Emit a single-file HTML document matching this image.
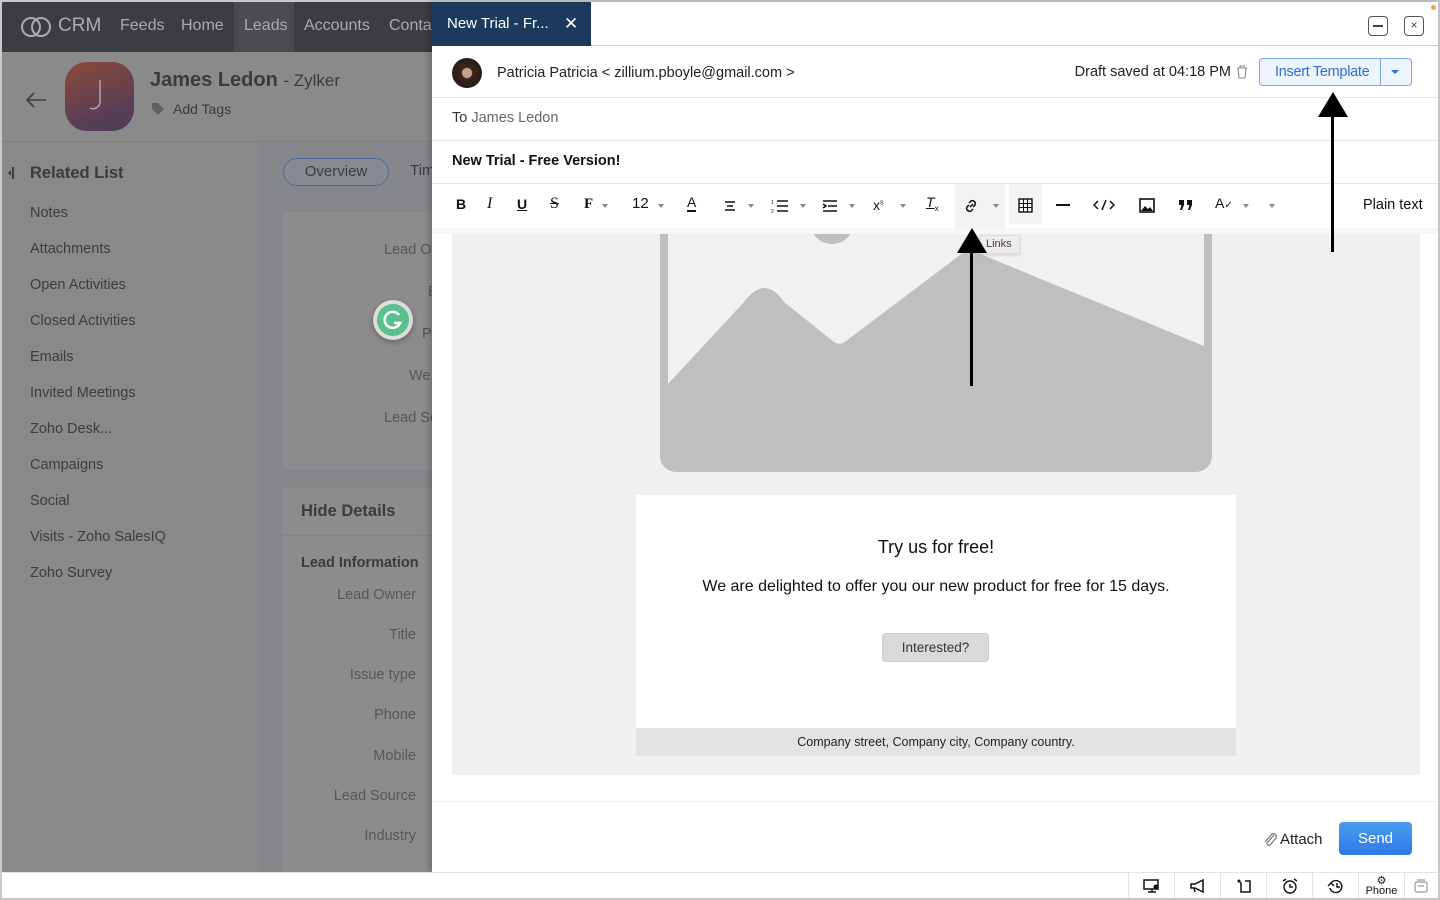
<!DOCTYPE html>
<html><head><meta charset="utf-8"><style>
*{box-sizing:border-box;margin:0;padding:0}
body{width:1440px;height:900px;overflow:hidden;background:#c9c9c9;font-family:"Liberation Sans",sans-serif;position:relative}
.abs{position:absolute}
.nav{left:2px;top:2px;width:430px;height:50px;background:#3b3d42;color:#a9abb0;font-size:16px}
.nav span{position:absolute;top:15px}
.lt{color:#3a3b3e}
.side a{position:absolute;left:30px;font-size:14.5px;color:#3c3d40}
.fld{position:absolute;right:1024px;font-size:14.5px;color:#55575c;text-align:right}
.tb{position:absolute;top:196px;font-size:14px;color:#111}
.car{position:absolute;width:0;height:0;border-left:3.5px solid transparent;border-right:3.5px solid transparent;border-top:4px solid #888}
.sb{width:46px;border-right:1px solid #e3e3e3;display:flex;align-items:center;justify-content:center}
</style></head><body>
<div class="abs" style="left:2px;top:2px;width:430px;height:870px;background:#898989"></div>
<div class="abs nav">
 <svg class="abs" style="left:18px;top:14px" width="32" height="22" viewBox="0 0 32 22"><circle cx="11" cy="11" r="9" fill="none" stroke="#a9abb0" stroke-width="2"/><circle cx="21" cy="11" r="9" fill="none" stroke="#a9abb0" stroke-width="2"/></svg>
 <span style="left:56px;top:13px;font-size:19px">CRM</span>
 <span style="left:118px">Feeds</span><span style="left:179px">Home</span>
 <div class="abs" style="left:232px;top:0;width:60px;height:50px;background:#4b4c51"></div>
 <span style="left:242px">Leads</span><span style="left:302px">Accounts</span><span style="left:387px">Conta</span>
</div>
<div class="abs" style="left:2px;top:52px;width:430px;height:90px;background:#8a8a8a;border-bottom:1px solid #7e7f82"></div>
<svg class="abs" style="left:24px;top:90px" width="24" height="20"><path d="M22 10H3M10 3L3 10l7 7" fill="none" stroke="#3c3d40" stroke-width="1.6"/></svg>
<div class="abs" style="left:65px;top:62px;width:69px;height:69px;border-radius:22px;background:linear-gradient(160deg,#8b4a3a,#5a3e55 70%,#4a3d55)"></div>
<svg class="abs" style="left:88px;top:78px" width="20" height="36"><path d="M12 2v22a7 7 0 01-10 6" fill="none" stroke="#b4a6ae" stroke-width="1.5"/></svg>
<div class="abs lt" style="left:150px;top:69px;font-size:20px;font-weight:bold">James Ledon <span style="font-weight:normal;font-size:17px">- Zylker</span></div>
<svg class="abs" style="left:151px;top:102px" width="14" height="14"><path d="M1 7V1h6l6 6-6 6z" fill="#5f6063"/></svg>
<div class="abs lt" style="left:173px;top:101px;font-size:14px">Add Tags</div>
<div class="abs" style="left:260px;top:143px;width:172px;height:729px;background:#86878b"></div>
<div class="abs" style="left:12px;top:167px;width:2px;height:12px;background:#3c3d40"></div>
<div class="abs" style="left:8px;top:170px;border-top:3px solid transparent;border-bottom:3px solid transparent;border-right:3px solid #3c3d40"></div>
<div class="abs lt" style="left:30px;top:164px;font-size:16.5px;font-weight:bold">Related List</div>
<div class="side">
<a style="top:205px">Notes</a><a style="top:241px">Attachments</a><a style="top:277px">Open Activities</a><a style="top:313px">Closed Activities</a><a style="top:349px">Emails</a><a style="top:385px">Invited Meetings</a><a style="top:421px">Zoho Desk...</a><a style="top:457px">Campaigns</a><a style="top:493px">Social</a><a style="top:529px">Visits - Zoho SalesIQ</a><a style="top:565px">Zoho Survey</a>
</div>
<div class="abs" style="left:283px;top:158px;width:106px;height:28px;border:1.5px solid #4f6b95;border-radius:14px;font-size:15px;color:#3c3d40;text-align:center;line-height:25px;background:#878a90">Overview</div>
<div class="abs lt" style="left:410px;top:162px;font-size:15px">Tim</div>
<div class="abs" style="left:281px;top:210px;width:160px;height:261px;background:#8c8c8c;border:1px solid #828386;border-radius:4px"></div>
<div class="fld" style="top:242px;right:auto;left:384px">Lead O</div>
<div class="fld" style="top:284px;right:auto;left:428px">E</div>
<div class="fld" style="top:326px;right:auto;left:422px">P</div>
<div class="fld" style="top:368px;right:auto;left:409px">We</div>
<div class="fld" style="top:410px;right:auto;left:384px">Lead Sc</div>
<div class="abs" style="left:373px;top:300px;width:40px;height:40px;border-radius:50%;background:#dcdcdc;box-shadow:0 2px 6px rgba(0,0,0,.3)"></div>
<div class="abs" style="left:377px;top:304px;width:32px;height:32px;border-radius:50%;background:#5ac08f"></div>
<svg class="abs" style="left:377px;top:304px" width="32" height="32"><path d="M22 11a8 8 0 10 1 8h-6" fill="none" stroke="#fff" stroke-width="2.5"/></svg>
<div class="abs" style="left:281px;top:487px;width:160px;height:400px;background:#8c8c8c;border:1px solid #828386;border-radius:4px"></div>
<div class="abs" style="left:281px;top:535px;width:160px;height:1px;background:#828386"></div>
<div class="abs lt" style="left:301px;top:502px;font-size:16.5px;font-weight:bold">Hide Details</div>
<div class="abs lt" style="left:301px;top:555px;font-size:14.5px;font-weight:bold">Lead Information</div>
<div class="fld" style="top:587px">Lead Owner</div><div class="fld" style="top:627px">Title</div><div class="fld" style="top:667px">Issue type</div><div class="fld" style="top:707px">Phone</div><div class="fld" style="top:748px">Mobile</div><div class="fld" style="top:788px">Lead Source</div><div class="fld" style="top:828px">Industry</div>

<div class="abs" style="left:432px;top:2px;width:1006px;height:870px;background:#fff;box-shadow:-3px 0 6px rgba(0,0,0,.2)"></div>
<div class="abs" style="left:432px;top:2px;width:159px;height:44px;background:#1c3a5e;color:#fff;font-size:15px;line-height:44px;padding-left:15px">New Trial - Fr...<span style="position:absolute;left:132px;font-size:17px">✕</span></div>
<div class="abs" style="left:591px;top:45px;width:847px;height:1px;background:#c7ccd6"></div>
<div class="abs" style="left:1368px;top:16px;width:20px;height:20px;border:1.3px solid #555;border-radius:4px"><div style="margin:8px 4px;height:1.5px;background:#444"></div></div>
<div class="abs" style="left:1404px;top:16px;width:20px;height:20px;border:1.3px solid #555;border-radius:4px;font-size:12px;text-align:center;line-height:17px;color:#444">×</div>
<div class="abs" style="left:1431px;top:5px;width:5px;height:5px;border-radius:50%;background:#f4a14a"></div>
<div class="abs" style="left:452px;top:58px;width:30px;height:30px;border-radius:50%;background:radial-gradient(ellipse at 50% 50%,#c9a08c 0 22%,#3a2520 26%,#1e1410)"></div>
<div class="abs" style="left:497px;top:65px;font-size:14.5px;color:#222">Patricia Patricia &lt; zillium.pboyle@gmail.com &gt;</div>
<div class="abs" style="right:209px;top:64px;font-size:14.5px;color:#222;white-space:nowrap">Draft saved at 04:18 PM</div>
<svg class="abs" style="left:1236px;top:65px" width="12" height="14"><path d="M1 3h10M4 3V1h4v2M2 3l1 10h6l1-10" fill="none" stroke="#888" stroke-width="1.1"/></svg>
<div class="abs" style="left:1259px;top:58px;width:153px;height:28px;border:1px solid #7aa7ea;border-radius:4px;background:#eef4fe"></div>
<div class="abs" style="left:1275px;top:64px;font-size:14.5px;color:#2d6fd6;letter-spacing:-0.3px">Insert Template</div>
<div class="abs" style="left:1380px;top:58px;width:1px;height:28px;background:#7aa7ea"></div>
<div class="abs" style="left:1391px;top:70px;border-left:4px solid transparent;border-right:4px solid transparent;border-top:4px solid #2d6fd6;width:0"></div>
<div class="abs" style="left:432px;top:97px;width:1006px;height:1px;background:#e6e6e6"></div>
<div class="abs" style="left:452px;top:110px;font-size:14.5px;color:#666"><span style="color:#333">To</span> James Ledon</div>
<div class="abs" style="left:432px;top:140px;width:1006px;height:1px;background:#e6e6e6"></div>
<div class="abs" style="left:452px;top:153px;font-size:14.5px;color:#111;font-weight:bold">New Trial - Free Version!</div>
<div class="abs" style="left:432px;top:183px;width:1006px;height:1px;background:#e6e6e6"></div>
<div class="abs" style="left:955px;top:184px;width:50px;height:44px;background:#f3f3f3"></div>
<div class="abs" style="left:1009px;top:184px;width:33px;height:40px;background:#f3f3f3"></div>
<div class="tb" style="left:456px;font-weight:bold">B</div>
<div class="tb" style="left:487px;font-family:'Liberation Serif';font-style:italic;font-size:16px;top:195px">I</div>
<div class="tb" style="left:517px;text-decoration:underline;font-weight:bold">U</div>
<div class="tb" style="left:550px;font-family:'Liberation Serif';font-size:16px;top:195px;text-decoration:line-through">S</div>
<div class="tb" style="left:584px;font-family:'Liberation Serif';font-weight:bold;font-size:15px">F</div><div class="car" style="left:602px;top:204px"></div>
<div class="tb" style="left:632px;top:195px;font-size:15px">12</div><div class="car" style="left:658px;top:204px"></div>
<div class="tb" style="left:687px;font-size:14px;top:195px;border-bottom:2px solid #111;line-height:15px">A</div>
<svg class="abs" style="left:723px;top:199px" width="14" height="14"><path d="M2 3h10M4 7h6M2 11h10" stroke="#111" stroke-width="1.6"/></svg><div class="car" style="left:748px;top:204px"></div>
<svg class="abs" style="left:771px;top:198px" width="18" height="16"><path d="M6 3h11M6 8h11M6 13h11" stroke="#111" stroke-width="1.6"/><text x="0" y="6" font-size="5" fill="#111">1</text><text x="0" y="15" font-size="5" fill="#111">2</text></svg><div class="car" style="left:800px;top:204px"></div>
<svg class="abs" style="left:822px;top:199px" width="16" height="14"><path d="M1 2h14M6 7h9M1 12h14M1 5l3 2-3 2" stroke="#111" stroke-width="1.6" fill="none"/></svg><div class="car" style="left:849px;top:204px"></div>
<div class="tb" style="left:873px;top:197px;font-size:14px">x<sup style="font-size:7px">s</sup></div><div class="car" style="left:900px;top:204px"></div>
<div class="tb" style="left:926px;top:194px;font-style:italic;font-size:14px;text-decoration:underline">T<sub style="font-size:8px;font-style:normal">x</sub></div>
<svg class="abs" style="left:963px;top:198px" width="16" height="16"><path d="M7 9l3-3M6 5l2-2a3 3 0 014 4l-2 2M10 11l-2 2a3 3 0 01-4-4l2-2" stroke="#111" stroke-width="1.5" fill="none"/></svg><div class="car" style="left:993px;top:204px"></div>
<svg class="abs" style="left:1018px;top:198px" width="15" height="15"><rect x="1" y="1" width="13" height="13" fill="none" stroke="#111" stroke-width="1.4"/><path d="M1 5.5h13M1 9.5h13M5.5 1v13M9.5 1v13" stroke="#111" stroke-width="1"/></svg>
<div class="abs" style="left:1056px;top:204px;width:14px;height:2px;background:#111"></div>
<svg class="abs" style="left:1093px;top:199px" width="22" height="12"><path d="M5 2L1 6l4 4M17 2l4 4-4 4M13 1L9 11" fill="none" stroke="#111" stroke-width="1.5"/></svg>
<svg class="abs" style="left:1139px;top:198px" width="16" height="15"><rect x="1" y="1" width="14" height="13" fill="none" stroke="#111" stroke-width="1.6"/><path d="M2 13l4-5 3 3 2-2 3 4z" fill="#111"/></svg>
<svg class="abs" style="left:1178px;top:199px" width="16" height="12"><path d="M1 1h5v5l-2 5H2l1.5-5H1zM9 1h5v5l-2 5h-2l1.5-5H9z" fill="#111"/></svg>
<div class="tb" style="left:1215px;top:195px;font-size:14px">A<span style="font-size:10px">✓</span></div><div class="car" style="left:1243px;top:204px"></div><div class="car" style="left:1269px;top:204px"></div>
<div class="abs" style="left:1363px;top:197px;font-size:14.5px;color:#111">Plain text</div>
<div class="abs" style="left:432px;top:228px;width:1006px;height:6px;background:#f6f6f6"></div>
<div class="abs" style="left:452px;top:234px;width:968px;height:541px;background:#f0f0f0"></div>
<svg class="abs" style="left:660px;top:234px" width="552" height="238"><path d="M0 0v222a16 16 0 0016 16h520a16 16 0 0016-16V0" fill="#bfbfbf"/><rect x="8" y="0" width="536" height="230" fill="#f1f1f1"/><circle cx="172" cy="-12" r="22" fill="#bfbfbf"/><path d="M8 150L84 68Q105 40 124 68L174 108Q180 112 186 107L308 15L544 112V230H8z" fill="#bfbfbf"/></svg>
<div class="abs" style="left:636px;top:495px;width:600px;height:233px;background:#fff"></div>
<div class="abs" style="left:636px;top:537px;width:600px;text-align:center;font-size:18px;color:#111">Try us for free!</div>
<div class="abs" style="left:636px;top:578px;width:600px;text-align:center;font-size:16px;color:#111">We are delighted to offer you our new product for free for 15 days.</div>
<div class="abs" style="left:882px;top:633px;width:107px;height:29px;background:#d9d9d9;border-radius:4px;border:1px solid #ccc;text-align:center;line-height:27px;font-size:13.5px;color:#333">Interested?</div>
<div class="abs" style="left:636px;top:728px;width:600px;height:28px;background:#e3e3e3;text-align:center;line-height:28px;font-size:12.5px;color:#222">Company street, Company city, Company country.</div>
<div class="abs" style="left:980px;top:235px;width:40px;height:19px;background:#eeeaee;border:1px solid #ddd;font-size:11px;color:#444;line-height:17px;padding-left:5px;box-shadow:0 1px 3px rgba(0,0,0,.15)">Links</div>
<div class="abs" style="left:970px;top:250px;width:3px;height:136px;background:#000"></div>
<div class="abs" style="left:957px;top:228px;width:0;height:0;border-left:15px solid transparent;border-right:15px solid transparent;border-bottom:25px solid #000"></div>
<div class="abs" style="left:1331px;top:112px;width:3px;height:140px;background:#000"></div>
<div class="abs" style="left:1318px;top:92px;width:0;height:0;border-left:15px solid transparent;border-right:15px solid transparent;border-bottom:25px solid #000"></div>
<div class="abs" style="left:432px;top:801px;width:1006px;height:1px;background:#ececec"></div>
<svg class="abs" style="left:1262px;top:832px" width="16" height="16"><path d="M12 3L5 11a2 2 0 003 2l6-7a3 3 0 00-4-4L3 10" fill="none" stroke="#777" stroke-width="1.2"/></svg>
<div class="abs" style="left:1280px;top:831px;font-size:15px;color:#222">Attach</div>
<div class="abs" style="left:1339px;top:822px;width:73px;height:33px;background:linear-gradient(#4a9cf0,#2f7be6);border-radius:4px;color:#fff;font-size:15px;text-align:center;line-height:33px">Send</div>
<div class="abs" style="left:2px;top:872px;width:1436px;height:26px;background:#fff;border-top:1px solid #e3e3e3"></div>
<div class="abs" style="left:1128px;top:873px;width:310px;height:25px;display:flex;border-left:1px solid #e3e3e3">
<div class="sb"><svg width="18" height="14"><rect x="1" y="1" width="14" height="9" fill="none" stroke="#111" stroke-width="1.5"/><path d="M5 13h8M9 10v3" stroke="#111" stroke-width="1.5"/><circle cx="13" cy="8" r="2.5" fill="#111"/></svg></div>
<div class="sb"><svg width="18" height="14"><path d="M2 5h4l8-4v12l-8-4H2zM5 9l1 4" fill="none" stroke="#111" stroke-width="1.5"/></svg></div>
<div class="sb"><svg width="16" height="16"><path d="M3 3l2 2v9h9V3H9" fill="none" stroke="#111" stroke-width="1.5"/><circle cx="3" cy="3" r="1.5" fill="#111"/></svg></div>
<div class="sb"><svg width="18" height="18"><circle cx="9" cy="10" r="6" fill="none" stroke="#111" stroke-width="1.4"/><path d="M9 7v3h3M2 4l3-2M16 4l-3-2" fill="none" stroke="#111" stroke-width="1.4"/></svg></div>
<div class="sb"><svg width="18" height="18"><path d="M4 6a6 6 0 11-1 5" fill="none" stroke="#111" stroke-width="1.4"/><path d="M1 9l3-3 3 3M10 6v4h3" fill="none" stroke="#111" stroke-width="1.4"/></svg></div>
<div class="sb" style="flex-direction:column;font-size:11px;line-height:10px;color:#111"><span style="font-size:11px">⚙</span>Phone</div>
<div style="width:32px;display:flex;align-items:center;justify-content:center"><svg width="14" height="14"><rect x="1" y="3" width="12" height="10" rx="2" fill="none" stroke="#999" stroke-width="1.2"/><path d="M3 1h8M4 7h6" stroke="#999" stroke-width="1.2"/></svg></div>
</div>
</body></html>
